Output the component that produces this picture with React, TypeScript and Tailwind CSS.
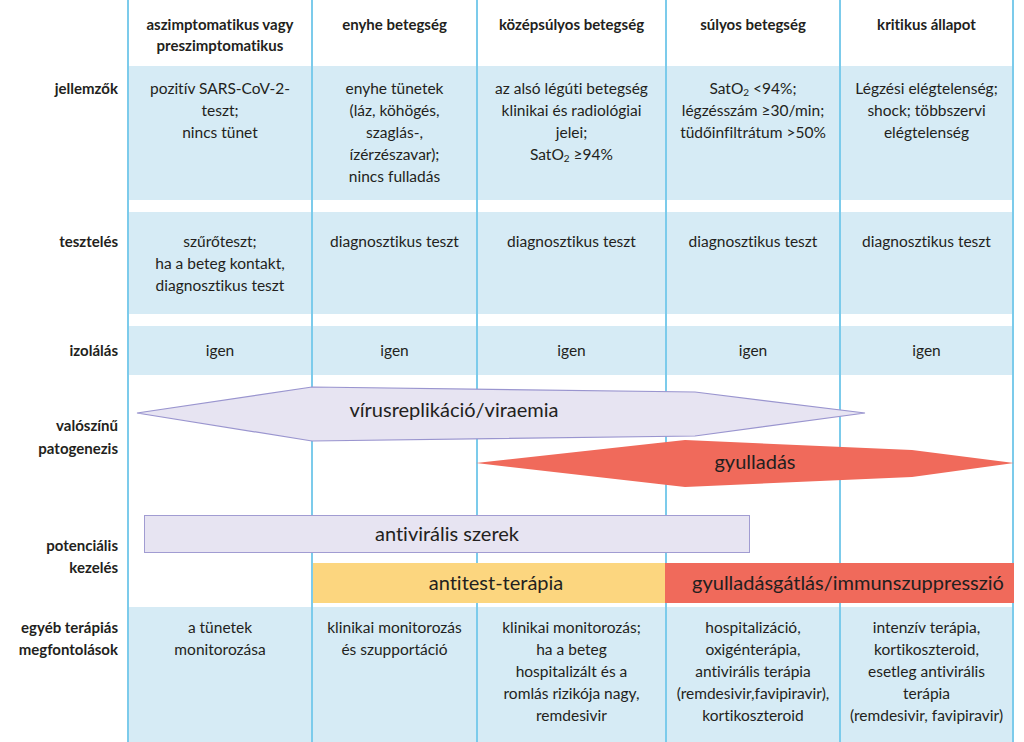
import React from 'react';

const GRID = 'grid grid-cols-[127px_184px_165px_189px_174px_175px]';
const LINE = 'border-l-2 border-[#7ccbeb]';

type Cell = React.ReactNode[];

const header = [
  ['aszimptomatikus vagy', 'preszimptomatikus'],
  ['enyhe betegség'],
  ['középsúlyos betegség'],
  ['súlyos betegség'],
  ['kritikus állapot'],
];

const sat = (rest: string) => (
  <>
    SatO<sub className="text-[10px] relative top-[2px]">2</sub>
    {rest}
  </>
);

const jellemzok: Cell[] = [
  ['pozitív SARS-CoV-2-', 'teszt;', 'nincs tünet'],
  ['enyhe tünetek', '(láz, köhögés,', 'szaglás-,', 'ízérzészavar);', 'nincs fulladás'],
  ['az alsó légúti betegség', 'klinikai és radiológiai', 'jelei;', sat(' ≥94%')],
  [sat(' <94%;'), 'légzésszám ≥30/min;', 'tüdőinfiltrátum >50%'],
  ['Légzési elégtelenség;', 'shock; többszervi', 'elégtelenség'],
];

const teszteles: Cell[] = [
  ['szűrőteszt;', 'ha a beteg kontakt,', 'diagnosztikus teszt'],
  ['diagnosztikus teszt'],
  ['diagnosztikus teszt'],
  ['diagnosztikus teszt'],
  ['diagnosztikus teszt'],
];

const egyeb: Cell[] = [
  ['a tünetek', 'monitorozása'],
  ['klinikai monitorozás', 'és szupportáció'],
  ['klinikai monitorozás;', 'ha a beteg', 'hospitalizált és a', 'romlás rizikója nagy,', 'remdesivir'],
  ['hospitalizáció,', 'oxigénterápia,', 'antivirális terápia', '(remdesivir,favipiravir),', 'kortikoszteroid'],
  ['intenzív terápia,', 'kortikoszteroid,', 'esetleg antivirális', 'terápia', '(remdesivir, favipiravir)'],
];

function Lines({ lines }: { lines: Cell }) {
  return (
    <>
      {lines.map((l, i) => (
        <div key={i} className="whitespace-nowrap">
          {l}
        </div>
      ))}
    </>
  );
}

// one blue data row with a bold label on the left
function DataRow({
  label,
  cells,
  height,
  pad,
}: {
  label: string[];
  cells: Cell[];
  height: string;
  pad: string;
}) {
  return (
    <div className={`${GRID} ${height}`}>
      <div className={`bg-white pr-[9px] text-right font-bold text-[15px] ${pad}`}>
        <Lines lines={label} />
      </div>
      {cells.map((c, i) => (
        <div
          key={i}
          className={`bg-[#d6ebf5] text-center ${LINE} ${i === 4 ? 'border-r-2' : ''} ${pad}`}
        >
          <Lines lines={c} />
        </div>
      ))}
    </div>
  );
}

function Gap({ height }: { height: string }) {
  return (
    <div className={`${GRID} ${height}`}>
      <div />
      {[0, 1, 2, 3, 4].map((i) => (
        <div key={i} className={`${LINE} ${i === 4 ? 'border-r-2' : ''}`} />
      ))}
    </div>
  );
}

function Pathogenesis() {
  return (
    <div className={`${GRID} h-[232px]`}>
      <div className="pr-[9px] text-right font-bold text-[15px] pt-[39px]">
        <div className="leading-[23px]">
          <div>valószínű</div>
          <div>patogenezis</div>
        </div>
        <div className="mt-[74px]">
          <div>potenciális</div>
          <div>kezelés</div>
        </div>
      </div>
      <div className="relative col-span-5 grid grid-cols-[184px_165px_189px_174px_175px]">
        {[0, 1, 2, 3, 4].map((i) => (
          <div key={i} className={`${LINE} ${i === 4 ? 'border-r-2' : ''}`} />
        ))}
        <svg className="absolute inset-0" width="887" height="232" viewBox="0 0 887 232">
          <polygon
            points="10,38 185,12 568,17 738,38 568,61 185,66"
            fill="#e7e4f2"
            stroke="#9a95cf"
            strokeWidth="1.2"
          />
          <text x="327" y="42" textAnchor="middle" fontSize="20" fill="#231f20">
            vírusreplikáció/viraemia
          </text>
          <polygon points="349,88 558,65 785,75 887,88 785,102 558,112" fill="#f06a5b" />
          <text x="628" y="94" textAnchor="middle" fontSize="20" fill="#231f20">
            gyulladás
          </text>
          <rect x="17.5" y="140.5" width="605" height="37" fill="#e7e4f2" stroke="#a19cd2" strokeWidth="1" />
          <text x="320" y="166" textAnchor="middle" fontSize="20" fill="#231f20">
            antivirális szerek
          </text>
          <rect x="186" y="188" width="352" height="40" fill="#fcd67f" />
          <text x="369" y="215" textAnchor="middle" fontSize="20" fill="#231f20">
            antitest-terápia
          </text>
          <rect x="538" y="188" width="349" height="40" fill="#f06a5b" />
          <text x="721" y="215" textAnchor="middle" fontSize="20" fill="#231f20">
            gyulladásgátlás/immunszuppresszió
          </text>
        </svg>
      </div>
    </div>
  );
}

export default function App() {
  return (
    <div className="w-[1024px] h-[742px] bg-white overflow-hidden font-['Lato',sans-serif] [font-variant-ligatures:none] text-[15.5px] leading-[22px] text-[#231f20]">
      {/* Header */}
      <div className={`${GRID} h-[66px]`}>
        <div />
        {header.map((h, i) => (
          <div
            key={i}
            className={`pt-[14px] text-center font-bold text-[15px] leading-[21px] ${LINE} ${i === 4 ? 'border-r-2' : ''}`}
          >
            <Lines lines={h} />
          </div>
        ))}
      </div>

      <DataRow label={['jellemzők']} cells={jellemzok} height="h-[134px]" pad="pt-[11px]" />
      <Gap height="h-[12px]" />
      <DataRow label={['tesztelés']} cells={teszteles} height="h-[102px]" pad="pt-[18px]" />
      <Gap height="h-[12px]" />
      <DataRow label={['izolálás']} cells={[['igen'], ['igen'], ['igen'], ['igen'], ['igen']]} height="h-[49px]" pad="pt-[13px]" />

      {/* Pathogenesis / treatment timeline */}
      <Pathogenesis />

      <DataRow
        label={['egyéb terápiás', 'megfontolások']}
        cells={egyeb}
        height="h-[135px]"
        pad="pt-[9px]"
      />
    </div>
  );
}
